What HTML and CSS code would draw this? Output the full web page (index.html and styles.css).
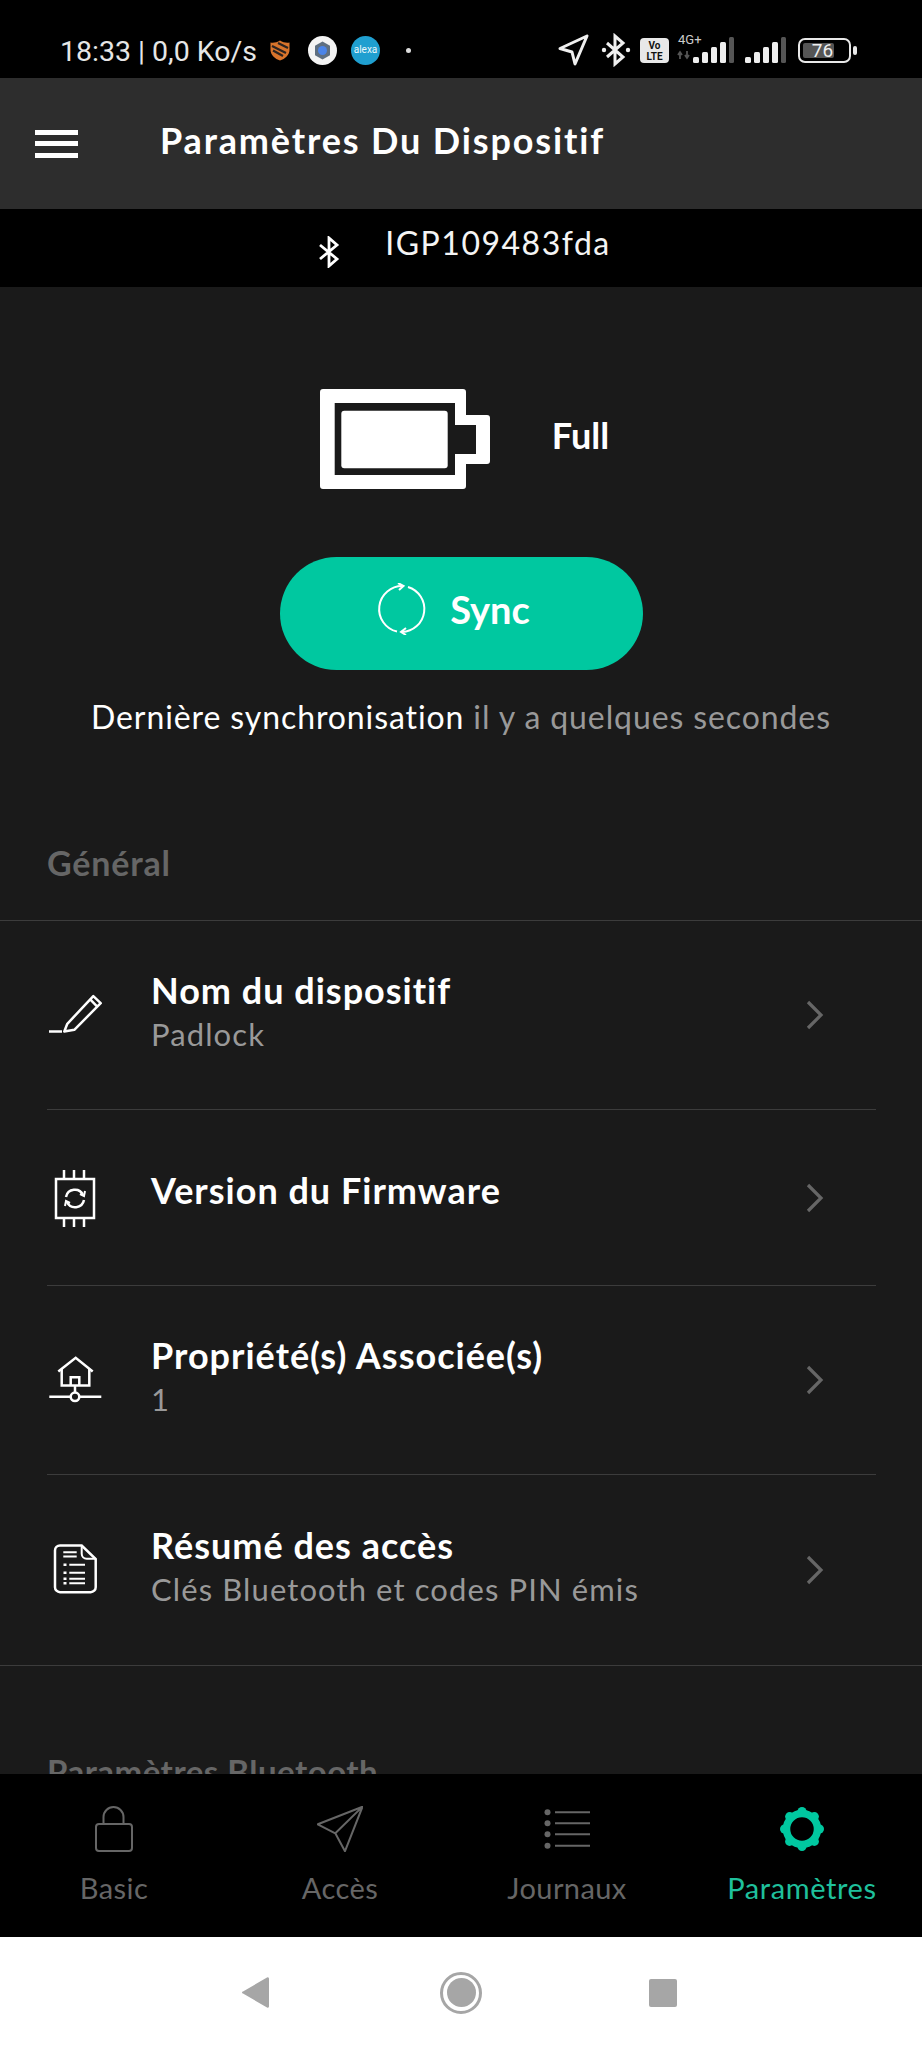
FILE: index.html
```html
<!DOCTYPE html>
<html lang="fr">
<head>
<meta charset="utf-8">
<title>Paramètres Du Dispositif</title>
<link rel="stylesheet" href="styles.css">
</head>
<body>
<div class="screen">
  <div class="status">
    <div class="status-left">
      <span class="status-text">18:33 | 0,0 Ko/s</span>
      <svg class="st-shield" width="20" height="21" viewBox="0 0 20 21"><path d="M10 0.500C7 2.500 3.500 3 0.500 2.500V10C0.500 15 5 19 10 20.500C15 19 19.500 15 19.500 10V2.500C16.500 3 13 2.500 10 0.500Z" fill="#d9742b"/><path d="M2 6L16 13M3 10.500L13 16M8 3L18 8" stroke="#2b2320" stroke-width="2.200"/></svg>
      <svg class="st-gear" width="29" height="29" viewBox="0 0 29 29"><circle cx="14.500" cy="14.500" r="14.500" fill="#f4f4f4"/><path d="M14.500 5.500L22 9.800V19.200L14.500 23.500L7 19.200V9.800Z" fill="#5f6f80"/><circle cx="14.500" cy="14.500" r="4.500" fill="#4b84e8"/></svg>
      <span class="st-alexa">alexa</span>
      <span class="st-dot"></span>
    </div>
    <div class="status-right">
      <svg width="31" height="32" viewBox="0 0 31 32"><path d="M29 2L2 14.500L14 18L17 30Z" fill="none" stroke="#efefef" stroke-width="3" stroke-linejoin="round"/></svg>
      <svg class="st-bt" width="30" height="34" viewBox="0 0 30 34"><path d="M6 10L22 24L14 31V3L22 10L6 24" fill="none" stroke="#efefef" stroke-width="3"/><circle cx="3" cy="17" r="2.200" fill="#efefef"/><circle cx="27" cy="17" r="2.200" fill="#efefef"/></svg>
      <span class="st-volte">Vo<br>LTE</span>
      <div class="st-net">
        <span class="st-4g">4G+</span>
        <svg width="57" height="26" viewBox="0 0 57 26"><path d="M3 22V15M1 18L3 15L5 18M10 14V21M8 18L10 21L12 18" fill="none" stroke="#555" stroke-width="1.800"/><rect x="16" y="20" width="6" height="6" rx="1.500" fill="#eee"/><rect x="25" y="15" width="6" height="11" rx="1.500" fill="#eee"/><rect x="34" y="10" width="6" height="16" rx="1.500" fill="#eee"/><rect x="43" y="5" width="6" height="21" rx="1.500" fill="#eee"/><rect x="52" y="0" width="5" height="26" rx="1.500" fill="#555"/></svg>
      </div>
      <svg class="st-sig" width="41" height="26" viewBox="0 0 41 26"><rect x="0" y="20" width="6" height="6" rx="1.500" fill="#eee"/><rect x="9" y="15" width="6" height="11" rx="1.500" fill="#eee"/><rect x="18" y="10" width="6" height="16" rx="1.500" fill="#eee"/><rect x="27" y="5" width="6" height="21" rx="1.500" fill="#eee"/><rect x="36" y="0" width="5" height="26" rx="1.500" fill="#555"/></svg>
      <div class="st-batt"><span class="st-batt-fill"></span><span class="st-batt-num">76</span></div>
      <span class="st-batt-nub"></span>
    </div>
  </div>

  <header class="topbar">
    <div class="burger"><span></span><span></span><span></span></div>
    <h1 class="title">Paramètres Du Dispositif</h1>
  </header>

  <div class="devicebar">
    <svg class="device-bt" width="22" height="32" viewBox="0 0 22 32"><path d="M2 9L19 23L11 30V2L19 9L2 23" fill="none" stroke="#fff" stroke-width="2.800"/></svg>
    <span class="device-name">IGP109483fda</span>
  </div>

  <main class="content">
    <div class="battery-row">
      <svg width="170" height="100" viewBox="0 0 170 100"><path fill="#fff" fill-rule="evenodd" d="M3 0H143A3 3 0 0 1 146 3V26H167A3 3 0 0 1 170 29V72A3 3 0 0 1 167 75H146V97A3 3 0 0 1 143 100H3A3 3 0 0 1 0 97V3A3 3 0 0 1 3 0ZM14.700 14V86H135V65H156V36H135V14Z"/><rect x="21.300" y="21.700" width="106.400" height="57.600" rx="3" fill="#fff"/></svg>
      <span class="battery-label">Full</span>
    </div>
    <button class="sync-btn">
      <svg width="50" height="52" viewBox="0 0 50 52"><path d="M26 3.100A23 23 0 0 0 20 48.500M31 4A23 23 0 0 1 25 49" fill="none" stroke="#fff" stroke-width="2"/><path d="M21 0L26.500 3L22 7M29 45L24 49L29 52" fill="none" stroke="#fff" stroke-width="2"/></svg>
      <span>Sync</span>
    </button>
    <p class="last-sync">Dernière synchronisation <span class="muted">il y a quelques secondes</span></p>

    <h2 class="section-head">Général</h2>
    <div class="list">
      <div class="row">
        <svg class="row-icon" width="60" height="60" viewBox="0 0 60 60"><g fill="none" stroke="#fff" stroke-width="2.500" stroke-linejoin="round"><path d="M17.300 46.500L20.300 38.800L46.300 11.200L53.700 18.200L27.300 44.800ZM43.700 14.800L50.700 22.200"/><path d="M2 46.500H15"/></g></svg>
        <div class="row-text"><div class="row-title">Nom du dispositif</div><div class="row-sub">Padlock</div></div>
        <svg class="chev" width="20" height="32" viewBox="0 0 20 32"><path d="M3 3L16 16L3 29" fill="none" stroke="#666" stroke-width="3.200"/></svg>
      </div>
      <div class="row row-single">
        <svg class="row-icon" width="60" height="60" viewBox="0 0 60 60"><g fill="none" stroke="#fff" stroke-width="2.500"><path d="M9 11H47V50H9Z"/><path d="M17 2V11M27 2V11M37 2V11M17 50V59M27 50V59M37 50V59"/><path d="M19 29A9 9 0 0 1 36 27M37 32A9 9 0 0 1 20 34"/><path d="M33 26L37 28L38 23M23 35L19 33L18 38" stroke-width="2"/></g></svg>
        <div class="row-text"><div class="row-title">Version du Firmware</div></div>
        <svg class="chev" width="20" height="32" viewBox="0 0 20 32"><path d="M3 3L16 16L3 29" fill="none" stroke="#666" stroke-width="3.200"/></svg>
      </div>
      <div class="row">
        <svg class="row-icon" width="60" height="60" viewBox="0 0 60 60"><g fill="none" stroke="#fff" stroke-width="2.500"><path d="M11.300 21.500L28.700 7.800L45.700 21.500"/><path d="M14.700 19V35.500H42.300V19"/><path d="M23.700 35.500V27.200H32.300V35.500"/><path d="M28 35.500V42.500"/><circle cx="28" cy="46.800" r="4.300"/><path d="M2.300 46.800H23.700M32.300 46.800H54.300"/></g></svg>
        <div class="row-text"><div class="row-title">Propriété(s) Associée(s)</div><div class="row-sub">1</div></div>
        <svg class="chev" width="20" height="32" viewBox="0 0 20 32"><path d="M3 3L16 16L3 29" fill="none" stroke="#666" stroke-width="3.200"/></svg>
      </div>
      <div class="row row-last">
        <svg class="row-icon" width="60" height="60" viewBox="0 0 60 60"><g fill="none" stroke="#fff"><path d="M13 5.500H34.700L48.700 19V47.200A5 5 0 0 1 43.700 52.200H13A5 5 0 0 1 8 47.200V10.500A5 5 0 0 1 13 5.500Z" stroke-width="2.500"/><path d="M34.700 5.500V13.800A5 5 0 0 0 39.700 18.800H48.700" stroke-width="2"/><path d="M16.300 12.200H29.700M16.300 16.500H29.700M22.300 24.800H38M22.300 32.800H38M22.300 38.800H38M22.300 43.200H38" stroke-width="2"/><path d="M16.500 24.800H19.500M16.500 32.800H19.500M16.500 38.800H19.500M16.500 43.200H19.500" stroke-width="2.500"/></g></svg>
        <div class="row-text"><div class="row-title">Résumé des accès</div><div class="row-sub">Clés Bluetooth et codes PIN émis</div></div>
        <svg class="chev" width="20" height="32" viewBox="0 0 20 32"><path d="M3 3L16 16L3 29" fill="none" stroke="#666" stroke-width="3.200"/></svg>
      </div>
    </div>
    <h2 class="section-head section-next">Paramètres Bluetooth</h2>
  </main>

  <nav class="tabs">
    <div class="tab">
      <svg width="46" height="46" viewBox="0 0 46 46"><g fill="none" stroke="#666" stroke-width="2"><rect x="5" y="18" width="36" height="27" rx="3"/><path d="M12.500 18V11A10 10 0 0 1 32.500 11V18"/></g></svg>
      <span>Basic</span>
    </div>
    <div class="tab">
      <svg width="46" height="46" viewBox="0 0 46 46"><path d="M45.500 .7L.8 18.300L18.300 27.300L28 45.200ZM18.300 27.300L45.500 .7" fill="none" stroke="#666" stroke-width="2" stroke-linejoin="round"/></svg>
      <span>Accès</span>
    </div>
    <div class="tab">
      <svg width="46" height="46" viewBox="0 0 46 46"><g fill="#666"><circle cx="3.500" cy="6.300" r="3"/><circle cx="3.500" cy="17.300" r="3"/><circle cx="3.500" cy="28.300" r="3"/><circle cx="3.500" cy="39.700" r="3"/></g><path d="M11 6.300H46M11 17.300H46M11 28.300H46M11 39.700H46" stroke="#666" stroke-width="2"/></svg>
      <span>Journaux</span>
    </div>
    <div class="tab tab-active">
      <svg width="46" height="46" viewBox="0 0 46 46"><g fill="#00c8a0"><circle cx="23" cy="5.500" r="4.500"/><circle cx="23" cy="40.500" r="4.500"/><circle cx="5.500" cy="23" r="4.500"/><circle cx="40.500" cy="23" r="4.500"/><circle cx="10.600" cy="10.600" r="4.500"/><circle cx="35.400" cy="10.600" r="4.500"/><circle cx="10.600" cy="35.400" r="4.500"/><circle cx="35.400" cy="35.400" r="4.500"/></g><circle cx="23" cy="23" r="15.500" fill="none" stroke="#00c8a0" stroke-width="7.500"/></svg>
      <span>Paramètres</span>
    </div>
  </nav>

  <div class="sysnav">
    <svg class="sys-back" width="27" height="31" viewBox="0 0 27 31"><path d="M27 1.500V29.500A1.500 1.500 0 0 1 25 30.500L1 16.500A1 1 0 0 1 1 14.500L25 .5A1.500 1.500 0 0 1 27 1.500Z" fill="#a6a6a6"/></svg>
    <span class="sys-home"><span class="sys-home-in"></span></span>
    <span class="sys-square"></span>
  </div>
</div>
</body>
</html>
```
FILE: styles.css
```css
* { box-sizing: border-box; }
html, body { margin: 0; padding: 0; }
body { background: #000; font-family: "Lato", "Liberation Sans", sans-serif; color: #fff; }
.screen { width: 922px; height: 2048px; display: flex; flex-direction: column; overflow: hidden; }

.status { height: 78px; flex: none; background: #000; display: flex; align-items: center; justify-content: space-between; padding: 22px 65px 0 60px; }
.status-left, .status-right { display: flex; align-items: center; }
.status-text { font-family: "Roboto", sans-serif; font-size: 28.500px; line-height: 34px; margin-top: 3px; color: #e6e6e6; white-space: nowrap; width: 198px; }
.st-shield { margin-left: 12px; }
.st-gear { margin-left: 18px; }
.st-alexa { width: 29px; height: 29px; margin-left: 14px; border-radius: 50%; background: #1f9fd0; color: #e8f6fb; font-family: "Roboto", sans-serif; font-size: 10px; line-height: 27px; text-align: center; }
.st-dot { width: 5px; height: 5px; margin-left: 26px; border-radius: 50%; background: #ddd; }
.status-right { gap: 11px; }
.st-bt { margin-left: 1px; }
.st-volte { width: 29px; height: 25px; background: #e8e8e8; border-radius: 4px; color: #111; font-family: "Roboto", sans-serif; font-weight: 700; font-size: 10px; line-height: 11px; text-align: center; padding-top: 2px; margin-left: -2px; }
.st-net { position: relative; width: 57px; height: 26px; margin-left: -3px; }
.st-net svg { display: block; }
.st-4g { position: absolute; left: 1px; top: -5px; font-family: "Roboto", sans-serif; font-size: 13px; line-height: 15px; color: #ccc; }
.st-batt { position: relative; width: 53px; height: 25px; border: 2.500px solid #e8e8e8; border-radius: 7px; margin-left: 1px; }
.st-batt-fill { position: absolute; left: 3px; top: 3px; bottom: 3px; width: 31px; background: #555; border-radius: 2px; }
.st-batt-num { position: absolute; left: 0; right: 4px; top: -2px; text-align: center; font-family: "Roboto", sans-serif; font-size: 19px; line-height: 25px; color: #eee; }
.st-batt-nub { width: 4px; height: 9px; background: #e8e8e8; border-radius: 2px; margin-left: -9px; }

.topbar { height: 131px; flex: none; background: #2d2d2d; display: flex; align-items: center; padding-left: 35px; gap: 82px; }
.burger { width: 43px; display: flex; flex-direction: column; gap: 6.500px; }
.burger span { display: block; height: 5px; background: #fff; }
.title { margin: 0 0 8px; font-size: 36px; font-weight: 700; letter-spacing: 1.850px; line-height: 42px; white-space: nowrap; }

.devicebar { height: 78px; flex: none; background: #000; display: flex; align-items: center; justify-content: center; gap: 45px; padding-left: 7px; }
.device-name { font-size: 32px; letter-spacing: 1.500px; line-height: 40px; margin-bottom: 11px; color: #f4f4f4; }
.device-bt { margin-top: 7px; }

.content { flex: 1; min-height: 0; overflow: hidden; background: #1a1a1a; display: flex; flex-direction: column; }
.battery-row { flex: none; display: flex; align-items: center; justify-content: center; gap: 62px; margin-top: 102px; height: 100px; padding-left: 7px; }
.battery-label { font-size: 36px; font-weight: 700; line-height: 44px; margin-bottom: 9px; }
.sync-btn { flex: none; align-self: center; width: 363px; height: 113px; margin-top: 68px; border: 0; border-radius: 57px; background: #00c8a0; color: #fff; font-family: inherit; display: flex; align-items: center; justify-content: center; gap: 23px; padding: 0 15px 10px 0; font-size: 38px; font-weight: 700; }
.last-sync { margin: 29px 0 0; height: 36px; line-height: 36px; text-align: center; font-size: 32px; color: #fff; letter-spacing: .9px; white-space: nowrap; }
.muted { color: #999; }
.section-head { margin: 110px 0 0; padding-left: 47px; height: 36px; line-height: 36px; font-size: 34px; font-weight: 700; letter-spacing: .8px; color: #666; flex: none; white-space: nowrap; }
.list { margin-top: 39px; border-top: 1px solid #3c3c3c; border-bottom: 1px solid #3c3c3c; padding: 0 46px 0 47px; flex: none; }
.row { display: flex; align-items: center; height: 189px; border-bottom: 1px solid #3c3c3c; }
.row-single { height: 176px; }
.row-last { border-bottom: 0; height: 190px; }
.row-icon { flex: none; margin-right: 44px; }
.row-text { flex: 1; min-width: 0; margin-bottom: 8px; }
.row-single .row-text { margin-bottom: 15px; }
.row-title { font-size: 36px; font-weight: 700; letter-spacing: 1px; line-height: 42px; white-space: nowrap; }
.row-sub { margin-top: 4px; font-size: 31px; line-height: 38px; color: #999; letter-spacing: 1.100px; white-space: nowrap; }
.chev { flex: none; margin-right: 51px; }
.section-next { margin-top: 87px; font-size: 33px; letter-spacing: .5px; }

.tabs { height: 163px; flex: none; background: #000; display: grid; grid-template-columns: 228px 224px 230px 240px; padding-top: 32px; }
.tab { display: flex; flex-direction: column; align-items: center; gap: 19px; color: #666; font-size: 29px; letter-spacing: .4px; line-height: 34px; }
.tab svg { display: block; }
.tab-active { color: #1fc09c; letter-spacing: .6px; }

.sysnav { height: 111px; flex: none; background: #fff; display: flex; align-items: center; justify-content: center; gap: 167px; padding-right: 3px; }
.sys-back { margin-right: 4px; }
.sys-home { width: 42px; height: 42px; border-radius: 50%; border: 3px solid #a6a6a6; display: flex; align-items: center; justify-content: center; }
.sys-home-in { width: 29px; height: 29px; border-radius: 50%; background: #a6a6a6; }
.sys-square { width: 28px; height: 28px; border-radius: 2px; background: #a6a6a6; }
```
